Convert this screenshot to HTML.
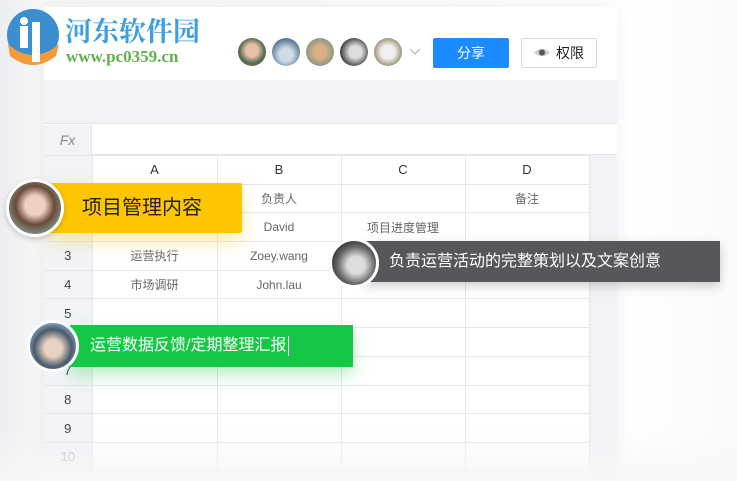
<!DOCTYPE html><html><head><meta charset="utf-8"><style>
*{margin:0;padding:0;box-sizing:border-box}
body{width:737px;height:481px;overflow:hidden;background:#f3f4f6;font-family:"Liberation Sans","Noto Sans CJK SC",sans-serif;position:relative}
.bgl{position:absolute;left:0;top:0;width:737px;height:481px;background:linear-gradient(90deg,#eceef1 0,#f7f7f8 40px,#fff 620px,#fafafa 737px)}
.card{position:absolute;left:44px;top:7px;width:573px;height:474px;background:#fff;box-shadow:0 0 20px rgba(0,0,0,.06)}
.tool{position:absolute;left:44px;top:80px;width:573px;height:44px;background:#f1f3f6;border-bottom:1px solid #e2e4e8}
.fx{position:absolute;left:44px;top:125px;width:48px;height:30px;background:#f1f3f6;color:#888;font-style:italic;font-size:14px;line-height:30px;text-align:center;border-right:1px solid #e4e6ea}
.fxb{position:absolute;left:92px;top:125px;width:525px;height:30px;border-bottom:1px solid #e4e6ea}
table{position:absolute;left:44px;top:155px;border-collapse:collapse;font-size:12px;color:#666}
td{border:1px solid #e4e6ea;height:28.7px;text-align:center;padding:0}
td.h{width:48px;background:#f1f3f6;font-size:13px;color:#444;border-left:none}
tr.top td{background:#fff;color:#333;font-size:13px}
.rg{position:absolute;left:589px;top:155px;width:28px;height:320px;background:#f1f3f6}
.fade{position:absolute;left:0;top:430px;width:737px;height:51px;background:linear-gradient(rgba(250,250,251,0),#f6f7f8)}
.av{position:absolute;border-radius:50%}
.tag{position:absolute;white-space:nowrap}
</style></head><body>
<div class="bgl"></div>
<div class="card"></div>
<div class="tool"></div>
<div class="fx">Fx</div><div class="fxb"></div>
<div class="rg"></div>
<table>
<tr class="top"><td class="h" style="background:#f1f3f6"></td><td style="width:125px">A</td><td style="width:124px">B</td><td style="width:124px">C</td><td style="width:124px">D</td></tr>
<tr><td class="h">1</td><td></td><td>负责人</td><td></td><td>备注</td></tr>
<tr><td class="h">2</td><td></td><td>David</td><td>项目进度管理</td><td></td></tr>
<tr><td class="h">3</td><td>运营执行</td><td>Zoey.wang</td><td></td><td></td></tr>
<tr><td class="h">4</td><td>市场调研</td><td>John.lau</td><td></td><td></td></tr>
<tr><td class="h">5</td><td></td><td></td><td></td><td></td></tr>
<tr><td class="h">6</td><td></td><td></td><td></td><td></td></tr>
<tr><td class="h">7</td><td></td><td></td><td></td><td></td></tr>
<tr><td class="h">8</td><td></td><td></td><td></td><td></td></tr>
<tr><td class="h">9</td><td></td><td></td><td></td><td></td></tr>
<tr><td class="h" style="color:#aaa">10</td><td></td><td></td><td></td><td></td></tr>
</table>
<div class="fade"></div>
<!-- logo -->
<svg style="position:absolute;left:4px;top:8px" width="58" height="60" viewBox="0 0 58 60"><circle cx="29" cy="27" r="26" fill="#3b8fd0"/><path d="M4 36 Q29 58 55 36 L52 48 Q29 66 6 48Z" fill="#f29b38"/><rect x="16" y="18" width="8" height="22" fill="#fff"/><rect x="28" y="14" width="8" height="40" fill="#fff"/><circle cx="20" cy="13" r="4" fill="#fff"/></svg>
<div class="tag" style="left:65px;top:10px;font-size:27px;font-weight:bold;color:#3d9fe2;font-family:'Noto Serif CJK SC',serif">河东软件园</div>
<div class="tag" style="left:66px;top:47px;font-size:17px;font-weight:bold;color:#5fb04a;font-family:'Liberation Serif',serif">www.pc0359.cn</div>
<!-- avatars -->
<div class="av" style="left:238px;top:38px;width:28px;height:28px;background:radial-gradient(circle at 50% 45%,#e8c0a8 30%,#5a6d50 60%)"></div>
<div class="av" style="left:272px;top:38px;width:28px;height:28px;background:radial-gradient(circle at 50% 60%,#cfdbe6 30%,#5b7a99 70%)"></div>
<div class="av" style="left:306px;top:38px;width:28px;height:28px;background:radial-gradient(circle,#d9b08a 30%,#8a9a80 70%)"></div>
<div class="av" style="left:340px;top:38px;width:28px;height:28px;background:radial-gradient(circle at 55% 50%,#ddd 30%,#333 75%)"></div>
<div class="av" style="left:374px;top:38px;width:28px;height:28px;background:radial-gradient(circle,#f0f0f0 35%,#8b7d5c 80%)"></div>
<svg style="position:absolute;left:409px;top:48px" width="12" height="8"><path d="M1 1 L6 6 L11 1" fill="none" stroke="#aaa" stroke-width="1"/></svg>
<div class="tag" style="left:433px;top:38px;width:76px;height:30px;background:#1a8cff;border-radius:2px;color:#fff;font-size:14px;line-height:30px;text-align:center">分享</div>
<div class="tag" style="left:521px;top:38px;width:76px;height:30px;border:1px solid #d6d8dc;border-radius:2px;color:#222;font-size:14px;line-height:28px;padding-left:34px">权限</div>
<svg style="position:absolute;left:533px;top:47px" width="18" height="11"><path d="M1 5.5 Q9 -2 17 5.5 Q9 13 1 5.5Z" fill="#ccc"/><circle cx="9" cy="5.5" r="3" fill="#555"/></svg>
<!-- yellow tag -->
<div class="tag" style="left:50px;top:183px;width:192px;height:50px;background:#fdc600;box-shadow:0 8px 18px rgba(253,198,0,.35);border-radius:2px;font-size:20px;line-height:50px;padding-left:32px;color:#222">项目管理内容</div>
<div class="av" style="left:6px;top:179px;width:58px;height:58px;border:3px solid #fff;background:radial-gradient(circle at 50% 45%,#f0d0c0 25%,#6b4a3a 50%,#7d8f80 75%);box-shadow:0 2px 6px rgba(0,0,0,.2)"></div>
<!-- dark tag -->
<div class="tag" style="left:365px;top:241px;width:355px;height:41px;background:#55575b;box-shadow:0 4px 10px rgba(0,0,0,.2);font-size:16px;line-height:41px;padding-left:24px;color:#fff">负责运营活动的完整策划以及文案创意</div>
<div class="av" style="left:329px;top:238px;width:50px;height:50px;border:3px solid #fff;background:radial-gradient(circle at 55% 55%,#ddd 25%,#666 55%,#222 85%)"></div>
<!-- green tag -->
<div class="tag" style="left:70px;top:325px;width:283px;height:42px;background:#14c846;box-shadow:0 8px 16px rgba(20,200,70,.3);font-size:16px;line-height:42px;padding-left:20px;color:#fff">运营数据反馈/定期整理汇报<span style="display:inline-block;width:1px;height:20px;background:#fff;vertical-align:middle;margin-left:2px"></span></div>
<div class="av" style="left:27px;top:320px;width:52px;height:52px;border:3px solid #fff;background:radial-gradient(circle at 50% 55%,#e8d2c4 25%,#4a5a6a 55%,#9cc4e0 85%)"></div>
</body></html>
